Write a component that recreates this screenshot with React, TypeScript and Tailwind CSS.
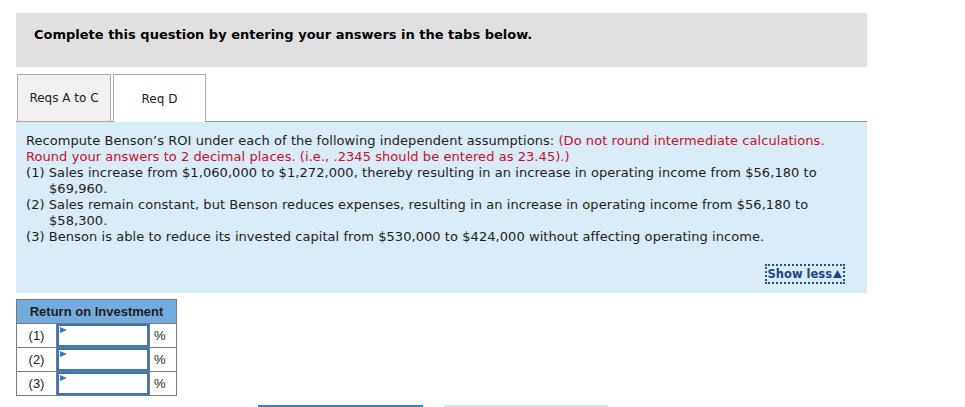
import React from "react";

function Flag() {
  return (
    <svg className="absolute left-[1px] top-[1px]" width="7" height="6" viewBox="0 0 7 6">
      <polygon points="0,0 7,3 0,6" fill="#3b78c0" />
    </svg>
  );
}

export default function App() {
  const rows = ["(1)", "(2)", "(3)"];
  return (
    <div className="w-[965px] h-[407px] bg-white overflow-hidden font-['DejaVu_Sans',sans-serif] text-[#222]">
      <div className="pt-[13px] pl-4 w-[867px]">
        <div className="h-[54px] bg-[#e0e0e0] pt-[14px] pl-[18px] text-[13px] leading-[16px] font-bold text-black">
          Complete this question by entering your answers in the tabs below.
        </div>
        <div className="mt-[7px] flex gap-[2px] pl-[1px] relative z-10 -mb-[1px]">
          <div className="w-[94px] h-[48px] border border-[#aaa] bg-[#f0f0f0] flex items-center justify-center text-[12px] text-[#222]">
            Reqs A to C
          </div>
          <div className="w-[93px] h-[48px] border border-b-0 border-[#aaa] bg-white flex items-center justify-center text-[12px] text-[#222]">
            Req D
          </div>
        </div>
        <div className="border-t border-[#999] bg-[#d9ebf7] pt-[11px] pl-[10px] pr-[22px] pb-[9px] text-[13px] leading-[16px] tracking-[0.06px] text-[#1e1e1e]">
          <div>
            Recompute Benson’s ROI under each of the following independent assumptions:{" "}
            <span className="text-[#c8102e]">(Do not round intermediate calculations.</span>
          </div>
          <div className="text-[#c8102e]">
            Round your answers to 2 decimal places. (i.e., .2345 should be entered as 23.45).)
          </div>
          <div className="pl-[23px] -indent-[23px]">
            (1) Sales increase from $1,060,000 to $1,272,000, thereby resulting in an increase in operating income from $56,180 to
            <br />
            $69,960.
          </div>
          <div className="pl-[23px] -indent-[23px]">
            (2) Sales remain constant, but Benson reduces expenses, resulting in an increase in operating income from $56,180 to
            <br />
            $58,300.
          </div>
          <div className="pl-[23px] -indent-[23px]">
            (3) Benson is able to reduce its invested capital from $530,000 to $424,000 without affecting operating income.
          </div>
          <div className="flex justify-end mt-[19px]">
            <div className="h-[20px] border-2 border-dotted border-[#1d5391] px-[1px] flex items-center text-[11.5px] tracking-normal font-bold text-[#174a85]">
              Show less
              <svg className="ml-[1px]" width="9" height="8" viewBox="0 0 9 8">
                <polygon points="4.5,0 9,8 0,8" fill="#174a85" />
              </svg>
            </div>
          </div>
        </div>
      </div>
      <table className="ml-4 mt-[6px] border-collapse font-['Liberation_Sans',Arial,sans-serif] text-[13px] text-[#222]">
        <thead>
          <tr>
            <th colSpan={3} className="h-[24px] bg-[#72acdf] border border-[#7a7a7a] font-bold text-[13px] text-[#1e1e1e] p-0">
              Return on Investment
            </th>
          </tr>
        </thead>
        <tbody>
          {rows.map((r) => (
            <tr key={r}>
              <td className="w-[40px] h-[24px] border border-[#7a7a7a] text-center p-0">{r}</td>
              <td className="w-[93px] h-[24px] border border-[#7a7a7a] p-0">
                <div className="relative h-[23px] border-2 border-[#3b76b9] bg-white">
                  <Flag />
                </div>
              </td>
              <td className="w-[27px] h-[24px] border border-[#7a7a7a] p-0 pl-[4px] text-left">%</td>
            </tr>
          ))}
        </tbody>
      </table>
      <div className="flex ml-[258px] mt-[9px] gap-[21px]">
        <div className="w-[165px] h-[2px] bg-[#3d7dc6]" />
        <div className="w-[164px] h-[2px] bg-[#d0e3f4]" />
      </div>
    </div>
  );
}
